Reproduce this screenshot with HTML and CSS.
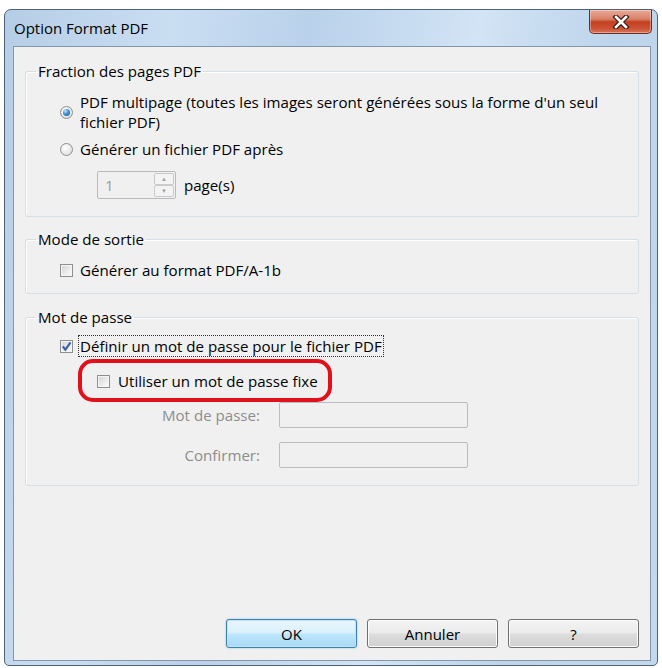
FILE: index.html
```html
<!DOCTYPE html>
<html lang="fr">
<head>
  <meta charset="UTF-8">
  <title>Option Format PDF</title>
  <link rel="stylesheet" href="styles.css">
</head>
<body>
  <div class="fenetre">
    <div class="titre">
      <span class="titre-texte">Option Format PDF</span>
      <button class="fermer" title="Fermer">
        <svg width="18" height="14" viewBox="0 0 18 14">
          <path d="M4 2 L14 12 M14 2 L4 12" stroke="#3d1a14" stroke-width="5" stroke-linecap="square" fill="none"/>
          <path d="M4 2 L14 12 M14 2 L4 12" stroke="#fff" stroke-width="2.6" stroke-linecap="square" fill="none"/>
        </svg>
      </button>
    </div>
    <div class="client">
      <fieldset class="groupe g-fraction">
        <legend>Fraction des pages PDF</legend>
        <div class="option">
          <span class="radio actif"></span>
          <span>PDF multipage (toutes les images seront générées sous la forme d'un seul<br>fichier PDF)</span>
        </div>
        <div class="option option-2">
          <span class="radio"></span>
          <span>Générer un fichier PDF après</span>
        </div>
        <div class="pages">
          <div class="spin">
            <span class="valeur">1</span>
            <div class="fleches">
              <span>&#9650;</span>
              <span>&#9660;</span>
            </div>
          </div>
          <span>page(s)</span>
        </div>
      </fieldset>

      <fieldset class="groupe g-sortie">
        <legend>Mode de sortie</legend>
        <div class="option">
          <span class="case"></span>
          <span>Générer au format PDF/A-1b</span>
        </div>
      </fieldset>

      <fieldset class="groupe g-passe">
        <legend>Mot de passe</legend>
        <div class="option">
          <span class="case">
            <svg width="11" height="11" viewBox="0 0 11 11"><path d="M1.8 5.4 L4.4 8.6 L9.5 1.4" stroke="#3d62ac" stroke-width="2.2" fill="none"/></svg>
          </span>
          <span class="focus">Définir un mot de passe pour le fichier PDF</span>
        </div>
        <div class="entoure">
          <span class="case"></span>
          <span>Utiliser un mot de passe fixe</span>
        </div>
        <div class="champs">
          <label>Mot de passe:</label>
          <input type="password" disabled>
          <label>Confirmer:</label>
          <input type="password" disabled>
        </div>
      </fieldset>

      <div class="boutons">
        <button class="bouton defaut">OK</button>
        <button class="bouton">Annuler</button>
        <button class="bouton">?</button>
      </div>
    </div>
  </div>
</body>
</html>
```

FILE: styles.css
```css
body { margin: 0; background: #fff; font-family: "Open Sans", Arial, sans-serif; font-size: 15.1px; line-height: 20px; color: #000; }

/* cadre de la fenetre */
.fenetre { margin: 9px 0 0 4px; width: 654px; height: 657px; box-sizing: border-box; border: 1px solid #4f6278; border-radius: 7px 7px 5px 5px; background: linear-gradient(100deg, #b5cde6 0%, #cadef2 22%, #b9d1ea 40%, #d2e4f5 62%, #bdd4eb 80%, #c3d8ee 100%); display: flex; flex-direction: column; }
.titre { height: 36px; display: flex; justify-content: space-between; align-items: flex-start; padding: 0 5px 0 9px; }
.titre-texte { margin-top: 8px; font-size: 15px; }
.fermer { width: 63px; height: 24px; padding: 0; border: 1px solid #6a2e22; border-top: none; border-radius: 0 0 5px 5px; background: linear-gradient(#eaa999 0%, #d98068 40%, #c3401f 52%, #cc5335 80%, #d9735a 100%); display: flex; align-items: center; justify-content: center; box-shadow: inset 0 0 0 1px rgba(255,255,255,0.35); }

.client { flex: 1; margin: 0 6px 4px 8px; border: 1px solid #8596a8; background: #f0f0f0; padding: 14px 11px 12px; display: flex; flex-direction: column; }

/* groupes */
.groupe { margin: 0; padding: 0; border: 1px solid #d5dfe5; border-radius: 3px; min-width: 0; box-shadow: inset 1px 1px 0 #fff; }
.groupe legend { margin-left: 10px; padding: 0 2px; line-height: 20px; }
.g-fraction { padding: 11px 0 17px; }
.g-sortie { margin-top: 12px; padding: 11px 0 13px; }
.g-passe { margin-top: 13px; padding: 8px 0 17px; }

.option { display: flex; align-items: center; gap: 7px; margin-left: 34px; }
.option-2 { margin-top: 7px; }

.radio { width: 13px; height: 13px; box-sizing: border-box; border-radius: 50%; border: 1px solid #8e8f8f; background: radial-gradient(circle at 40% 35%, #fff 0%, #e9e9e9 55%, #cfd0d1 100%); display: flex; align-items: center; justify-content: center; flex-shrink: 0; }
.radio.actif::after { content: ""; width: 7px; height: 7px; border-radius: 50%; background: radial-gradient(circle at 35% 30%, #c4e6fc 0%, #3a8fd0 45%, #1a5a96 100%); }

.case { width: 13px; height: 13px; box-sizing: border-box; border: 1px solid #8e8f8f; background: linear-gradient(135deg, #cfd2d6 0%, #eeeeee 60%, #fbfbfb 100%); box-shadow: inset 0 0 0 1px #f6f6f6; display: flex; align-items: center; justify-content: center; flex-shrink: 0; }

.pages { display: flex; align-items: center; gap: 8px; margin: 12px 0 0 71px; }
.spin { width: 79px; height: 28px; box-sizing: border-box; border: 1px solid #b8bcc0; border-radius: 2px; background: #f0f0f0; display: flex; }
.valeur { flex: 1; padding-left: 7px; line-height: 26px; color: #9b9b9b; }
.fleches { width: 20px; margin: 1px 1px 1px 0; display: flex; flex-direction: column; }
.fleches span { flex: 1; border: 1px solid #cacaca; border-radius: 2px; font-size: 6px; line-height: 1; color: #a0a0a0; display: flex; align-items: center; justify-content: center; background: #f3f3f3; }

.focus { outline: 1px dotted #333; outline-offset: 0; padding: 0 1px; margin-left: -1px; }
.g-passe .option { margin-top: 1px; }

/* annotation rouge */
.entoure { display: flex; align-items: center; gap: 8px; align-self: flex-start; width: fit-content; margin: 3px 0 0 52px; padding: 8px 10px 7px 15px; border: 4px solid #e1101a; border-radius: 15px; }

.champs { display: grid; grid-template-columns: 234px 189px; column-gap: 19px; row-gap: 14px; }
.champs label { text-align: right; line-height: 26px; color: #8d8d8d; }
.champs input { height: 26px; box-sizing: border-box; margin: 0; border: 1px solid #b9bdc1; border-radius: 2px; background: #f0f0f0; }

/* boutons */
.boutons { margin-top: auto; display: flex; justify-content: flex-end; gap: 10px; }
.bouton { width: 131px; height: 29px; font-family: inherit; font-size: 15px; color: #000; border: 1px solid #707070; border-radius: 3px; background: linear-gradient(#f3f3f3 0%, #ebebeb 48%, #dddddd 52%, #d0d0d0 100%); box-shadow: inset 0 0 0 1px #fcfcfc; }
.bouton.defaut { border-color: #3c7fb1; background: linear-gradient(#eaf6fd 0%, #d9f0fc 48%, #bee6fd 52%, #a7d9f5 100%); box-shadow: inset 0 0 0 1px #c4e5f6, 0 0 2px #7fc0e8; }
```
